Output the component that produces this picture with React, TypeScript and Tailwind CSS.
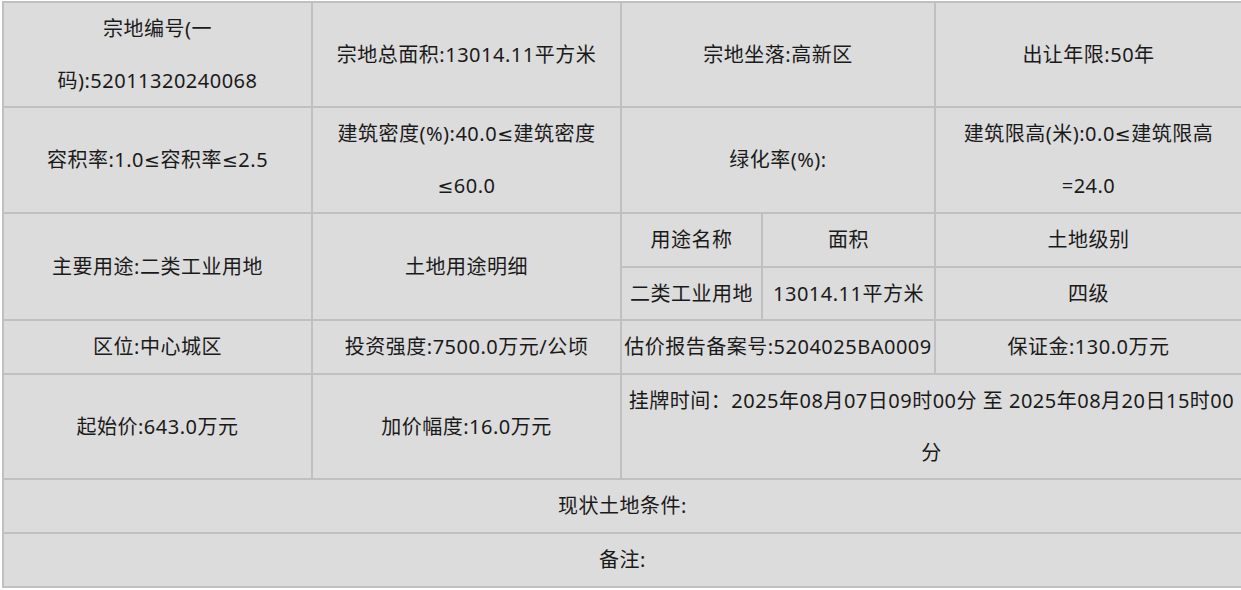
import React from "react";

const cell =
  "border-2 border-[#c0c0c0] bg-[#dcdcdc] text-center align-middle px-px leading-[51.7px] text-[20px] tracking-[0.5px] text-[#1a1a1a]";

// ≤ from the CJK font is full width; the reference uses a narrow Latin one
const Le = () => (
  <span style={{ fontFamily: '"DejaVu Sans", sans-serif' }} className="text-[19px] leading-none">
    ≤
  </span>
);

export default function App() {
  return (
    <div
      className="min-h-screen bg-white pl-[2px] pt-[1px]"
      style={{ fontFamily: '"Noto Sans", "Noto Sans CJK SC", sans-serif' }}
    >
      <table className="table-fixed border-collapse w-[1239px]">
        <colgroup>
          <col className="w-[309px]" />
          <col className="w-[309px]" />
          <col className="w-[141px]" />
          <col className="w-[173px]" />
          <col className="w-[307px]" />
        </colgroup>
        <tbody>
          <tr>
            <td className={cell}>
              宗地编号(一
              <br />
              码):52011320240068
            </td>
            <td className={cell}>宗地总面积:13014.11平方米</td>
            <td className={cell} colSpan={2}>
              宗地坐落:高新区
            </td>
            <td className={cell}>出让年限:50年</td>
          </tr>
          <tr>
            <td className={cell}>
              容积率:1.0<Le />容积率<Le />2.5
            </td>
            <td className={cell}>
              建筑密度(%):40.0<Le />建筑密度
              <br />
              <Le />60.0
            </td>
            <td className={cell} colSpan={2}>
              绿化率(%):
            </td>
            <td className={cell}>
              建筑限高(米):0.0<Le />建筑限高
              <br />
              =24.0
            </td>
          </tr>
          <tr>
            <td className={cell} rowSpan={2}>
              主要用途:二类工业用地
            </td>
            <td className={cell} rowSpan={2}>
              土地用途明细
            </td>
            <td className={cell}>用途名称</td>
            <td className={cell}>面积</td>
            <td className={cell}>土地级别</td>
          </tr>
          <tr>
            <td className={cell}>二类工业用地</td>
            <td className={cell}>13014.11平方米</td>
            <td className={cell}>四级</td>
          </tr>
          <tr>
            <td className={cell}>区位:中心城区</td>
            <td className={cell}>投资强度:7500.0万元/公顷</td>
            <td className={cell} colSpan={2}>
              估价报告备案号:5204025BA0009
            </td>
            <td className={cell}>保证金:130.0万元</td>
          </tr>
          <tr>
            <td className={cell}>起始价:643.0万元</td>
            <td className={cell}>加价幅度:16.0万元</td>
            <td className={cell} colSpan={3}>
              挂牌时间：2025年08月07日09时00分 至 2025年08月20日15时00
              <br />分
            </td>
          </tr>
          <tr>
            <td className={cell} colSpan={5}>
              现状土地条件:
            </td>
          </tr>
          <tr>
            <td className={cell} colSpan={5}>
              备注:
            </td>
          </tr>
        </tbody>
      </table>
    </div>
  );
}
